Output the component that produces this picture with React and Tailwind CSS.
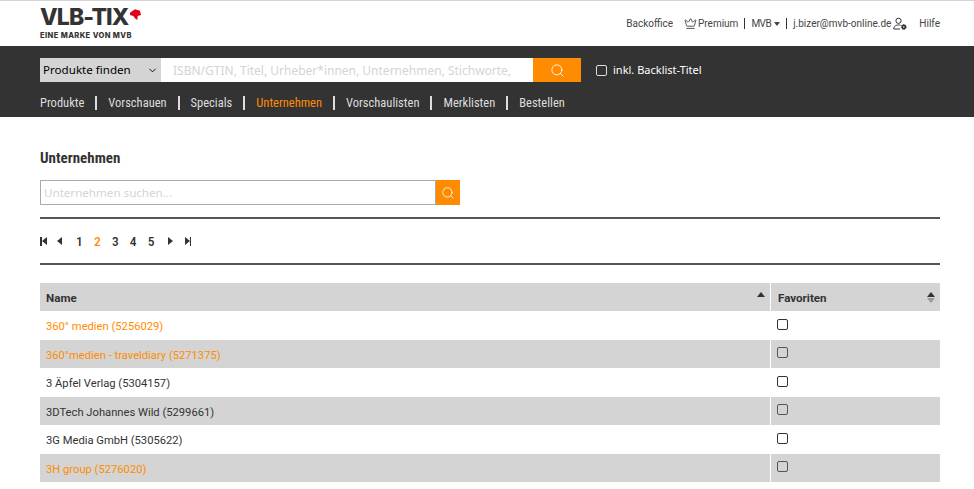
import { useState } from "react"
import { ChevronDown, Search, Crown } from "lucide-react"

const navItems = ["Produkte", "Vorschauen", "Specials", "Unternehmen", "Vorschaulisten", "Merklisten", "Bestellen"]

const rows = [
    { name: "360° medien (5256029)", linked: true, h: "h-[29px]" },
    { name: "360°medien - traveldiary (5271375)", linked: true, h: "h-[28px]" },
    { name: "3 Äpfel Verlag (5304157)", linked: false, h: "h-[29px]" },
    { name: "3DTech Johannes Wild (5299661)", linked: false, h: "h-[28px]" },
    { name: "3G Media GmbH (5305622)", linked: false, h: "h-[29px]" },
    { name: "3H group (5276020)", linked: true, h: "h-[28px]" },
]

function Logo() {
    return (
        <div className="font-['Inter',sans-serif] text-[#333]">
            <div className="flex h-[20px] items-center text-[23px] font-extrabold leading-none tracking-[-0.9px]">
                VLB-TIX
                <svg viewBox="0 0 11 11" className="ml-[2px] mt-[-6px] h-[11px] w-[11px]">
                    <path d="M0 3.7 L5 0.3 L10 1.7 L11 6 L7.7 7 L7.3 11 L5 9.3 L3.3 7 L0 6 Z" fill="#e3001b" />
                </svg>
            </div>
            <div className="mt-[4px] text-[7.5px] font-extrabold leading-[9px] tracking-[0.4px]">EINE MARKE VON MVB</div>
        </div>
    )
}

function UserGear() {
    return (
        <svg viewBox="0 0 14 14" className="h-[14px] w-[14px]" fill="none" stroke="#333" strokeWidth="1">
            <circle cx="5.5" cy="3.8" r="2.6" />
            <path d="M0.8 12 C0.8 8.5 3.5 8 5.5 8 C6.5 8 7.1 8.1 7.6 8.3 M0.8 12 H7" />
            <circle cx="10.8" cy="10" r="2.4" fill="#333" strokeWidth="1" strokeDasharray="1.1 0.8" />
            <circle cx="10.8" cy="10" r="0.8" fill="#fff" stroke="none" />
        </svg>
    )
}

function Caret({ dir }) {
    return <span className={dir === "left" ? "block h-0 w-0 border-y-[4.5px] border-r-[5px] border-y-transparent border-r-[#333]" : "block h-0 w-0 border-y-[4.5px] border-l-[5px] border-y-transparent border-l-[#333]"} />
}

function Box({ dim }) {
    return <span className={`block h-[11px] w-[11px] rounded-[2px] border ${dim ? "border-[#555]" : "border-[#333]"}`} />
}

function App() {
    const [query, setQuery] = useState("")

    return (
        <div className="h-[489px] overflow-hidden bg-white font-['Noto_Sans',sans-serif] text-[#333]">
            <header className="flex h-[46px] items-center justify-between border-t border-[#d4d4d4] pl-[40px] pr-[34px]">
                <Logo />
                <nav className="flex items-center font-['Roboto',sans-serif] text-[10px] text-[#444]">
                    <a>Backoffice</a>
                    <Crown size={13} strokeWidth={1.5} className="ml-[11px] mr-[1px] text-[#333]" />
                    <a>Premium</a>
                    <span className="mx-[6px] h-[11px] w-px bg-[#333]" />
                    <a className="tracking-[-0.5px]">MVB</a>
                    <span className="ml-[3px] h-0 w-0 border-x-[3px] border-t-[4px] border-x-transparent border-t-[#444]" />
                    <span className="mx-[6px] h-[11px] w-px bg-[#333]" />
                    <a>j.bizer@mvb-online.de</a>
                    <span className="ml-[2px]"><UserGear /></span>
                    <a className="ml-[12px]">Hilfe</a>
                </nav>
            </header>

            <div className="h-[71px] bg-[#333] px-[40px] pt-[12px]">
                <div className="flex h-[24px] items-center">
                    <div className="flex h-full w-[121px] items-center justify-between bg-[#d4d4d4] pl-[3px] pr-[3px] text-[11.6px] text-black">
                        Produkte finden
                        <ChevronDown size={11} strokeWidth={2} />
                    </div>
                    <input
                        value={query}
                        onChange={(e) => setQuery(e.target.value)}
                        placeholder="ISBN/GTIN, Titel, Urheber*innen, Unternehmen, Stichworte,"
                        className="h-full w-[372px] bg-white px-[12px] text-[12px] outline-none placeholder:text-[#d4d4d4]"
                    />
                    <button className="flex h-full w-[48px] items-center justify-center bg-[#ff8c00]">
                        <Search size={15} strokeWidth={1.4} className="text-white" />
                    </button>
                    <label className="ml-[15px] flex items-center text-[11px] text-white">
                        <span className="mr-[6px] block h-[11px] w-[11px] rounded-[2px] border border-[#ddd]" />
                        inkl. Backlist-Titel
                    </label>
                </div>
                <nav className="mt-[13px] flex items-center font-['Roboto',sans-serif] font-stretch-condensed text-[12.5px] leading-[16px] text-[#ddd]">
                    {navItems.map((item, i) => (
                        <div key={item} className="flex items-center">
                            {i > 0 && <span className="mx-[11px] h-[14px] w-[2px] bg-[#ddd]" />}
                            <a className={item === "Unternehmen" ? "text-[#ff8c00]" : ""}>{item}</a>
                        </div>
                    ))}
                </nav>
            </div>

            <main className="pl-[40px] pr-[34px]">
                <h1 className="mt-[32px] font-['Roboto',sans-serif] font-stretch-condensed text-[15px] font-bold leading-[18px] text-[#333]">Unternehmen</h1>
                <div className="mt-[13px] flex h-[25px] w-[420px]">
                    <input placeholder="Unternehmen suchen..." className="h-full flex-1 border border-[#aaa] px-[3px] text-[11.6px] outline-none placeholder:text-[#d4d4d4]" />
                    <button className="flex h-full w-[24px] items-center justify-center bg-[#ff8c00]">
                        <Search size={14} strokeWidth={1.4} className="text-white" />
                    </button>
                </div>
                <hr className="mt-[12px] border-t-2 border-[#555]" />

                <div className="mt-[14px] flex h-[16px] items-center font-['Roboto',sans-serif] font-stretch-condensed text-[13.5px] font-medium text-[#333]">
                    <span className="flex items-center"><span className="h-[9px] w-[1.5px] bg-[#333]" /><Caret dir="left" /></span>
                    <span className="ml-[10.5px]"><Caret dir="left" /></span>
                    <div className="ml-[14px] flex gap-[11.2px]">
                        <a>1</a>
                        <a className="text-[#ff8c00]">2</a>
                        <a>3</a>
                        <a>4</a>
                        <a>5</a>
                    </div>
                    <span className="ml-[13px]"><Caret dir="right" /></span>
                    <span className="ml-[12px] flex items-center"><Caret dir="right" /><span className="h-[9px] w-[1.5px] bg-[#333]" /></span>
                </div>
                <hr className="mt-[14px] border-t-2 border-[#555]" />

                <div className="mt-[18px] font-['Roboto',sans-serif] text-[11.2px]">
                    <div className="flex h-[28px] bg-[#d4d4d4] text-[11.6px] font-bold">
                        <div className="flex flex-1 items-center justify-between pl-[6px] pr-[5px] pt-[4px]">
                            Name
                            <span className="mb-[9px] h-0 w-0 border-x-[4px] border-b-[5px] border-x-transparent border-b-[#333]" />
                        </div>
                        <div className="flex w-[170px] items-center justify-between border-l border-white pl-[7px] pr-[5px] pt-[4px]">
                            Favoriten
                            <span className="mb-[4px] flex flex-col gap-[1px]">
                                <span className="h-0 w-0 border-x-[4px] border-b-[5px] border-x-transparent border-b-[#333]" />
                                <span className="h-0 w-0 border-x-[4px] border-t-[5px] border-x-transparent border-t-[#999]" />
                            </span>
                        </div>
                    </div>
                    {rows.map((row, i) => (
                        <div key={row.name} className={`flex ${row.h} ${i % 2 ? "bg-[#d4d4d4]" : "bg-white"}`}>
                            <div className={`flex flex-1 items-center pl-[6px] ${i % 2 ? "pt-[4px]" : "pt-[3px]"} ${row.linked ? "text-[#ff8c00]" : "text-[#333]"}`}>{row.name}</div>
                            <div className="flex w-[170px] items-center border-l border-white pb-[3px] pl-[6px]">
                                <Box dim={i % 2 === 1} />
                            </div>
                        </div>
                    ))}
                </div>
            </main>
        </div>
    )
}

export default App
